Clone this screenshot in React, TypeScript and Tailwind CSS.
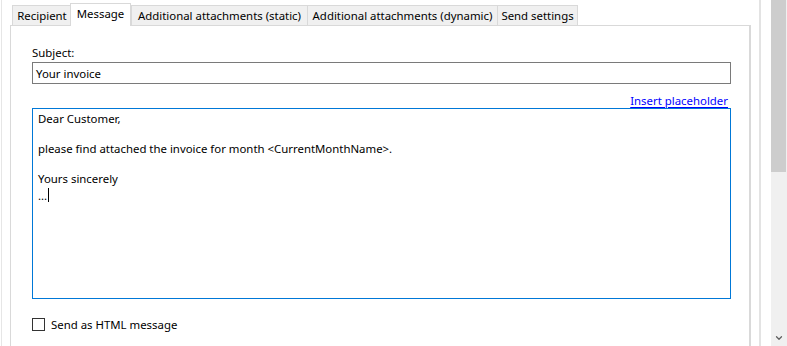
import { ChevronDown } from 'lucide-react';

const tabs = [
	{ label: 'Recipient', w: 'w-[59px]' },
	{ label: 'Message', w: 'w-[61px]', active: true },
	{ label: 'Additional attachments (static)', w: 'w-[177px]' },
	{ label: 'Additional attachments (dynamic)', w: 'w-[190px]' },
	{ label: 'Send settings', w: 'w-[80px]' }
];

const bodyLines = [
	'Dear Customer,',
	'',
	'please find attached the invoice for month <CurrentMonthName>.',
	'',
	'Yours sincerely'
];

const App = () => {
	return (
		<div className="flex h-[346px] w-[787px] overflow-hidden bg-white font-['Segoe_UI','Noto_Sans',sans-serif] text-[11.4px] leading-[15px] text-black">
			<div className="ml-px flex w-[750px] flex-col border-l border-[#e6e6e6] pl-[8px]">
				<div className="flex h-[25px] items-end pl-[2px]">
					{tabs.map(tab => (
						<div
							key={tab.label}
							className={
								tab.active
									? `relative z-10 -mb-px -ml-px flex h-[23px] ${tab.w} items-start justify-center whitespace-nowrap border border-b-0 border-[#d9d9d9] bg-white pt-[2px]`
									: `flex h-[20px] ${tab.w} items-center justify-center whitespace-nowrap border border-b-0 border-[#d9d9d9] bg-[#f0f0f0] pb-px first:border-r-0 [&+&]:border-l-0`
							}>
							{tab.label}
						</div>
					))}
				</div>
				<div className="flex flex-1 flex-col border-l border-r-2 border-t border-[#d9d9d9] pl-[21px] pr-[19px] pt-[19px]">
					<label className="block">Subject:</label>
					<div className="mt-[2px] flex h-[22px] w-[699px] items-center border border-[#7a7a7a] px-[3px]">
						Your invoice
					</div>
					<div className="mt-[9px] flex w-[699px] justify-end pr-[3px]">
						<a href="#" className="text-[#0000ff] underline underline-offset-[2px]">
							Insert placeholder
						</a>
					</div>
					<div className="h-[191px] w-[699px] whitespace-pre border border-[#0078d7] px-[5px] pt-[2px]">
						{bodyLines.map((line, i) => (
							<div key={i} className="h-[15px]">
								{line}
							</div>
						))}
						<div className="h-[15px]">
							...<span className="ml-px inline-block h-[14px] w-px translate-y-[2px] bg-black"></span>
						</div>
					</div>
					<label className="mt-[18px] flex items-center gap-[6px]">
						<span className="h-[13px] w-[13px] border border-[#333333] bg-white"></span>
						Send as HTML message
					</label>
				</div>
			</div>
			<div className="ml-[8px] w-[2px] bg-[#e3e3e3]"></div>
			<div className="ml-[10px] flex w-[16px] flex-col bg-[#f0f0f0]">
				<div className="h-[172px] w-[15px] bg-[#cdcdcd]"></div>
				<div className="flex-1"></div>
				<div className="flex h-[17px] items-center justify-center text-[#606060]">
					<ChevronDown size={10} strokeWidth={3} />
				</div>
			</div>
		</div>
	);
};

export default App;
